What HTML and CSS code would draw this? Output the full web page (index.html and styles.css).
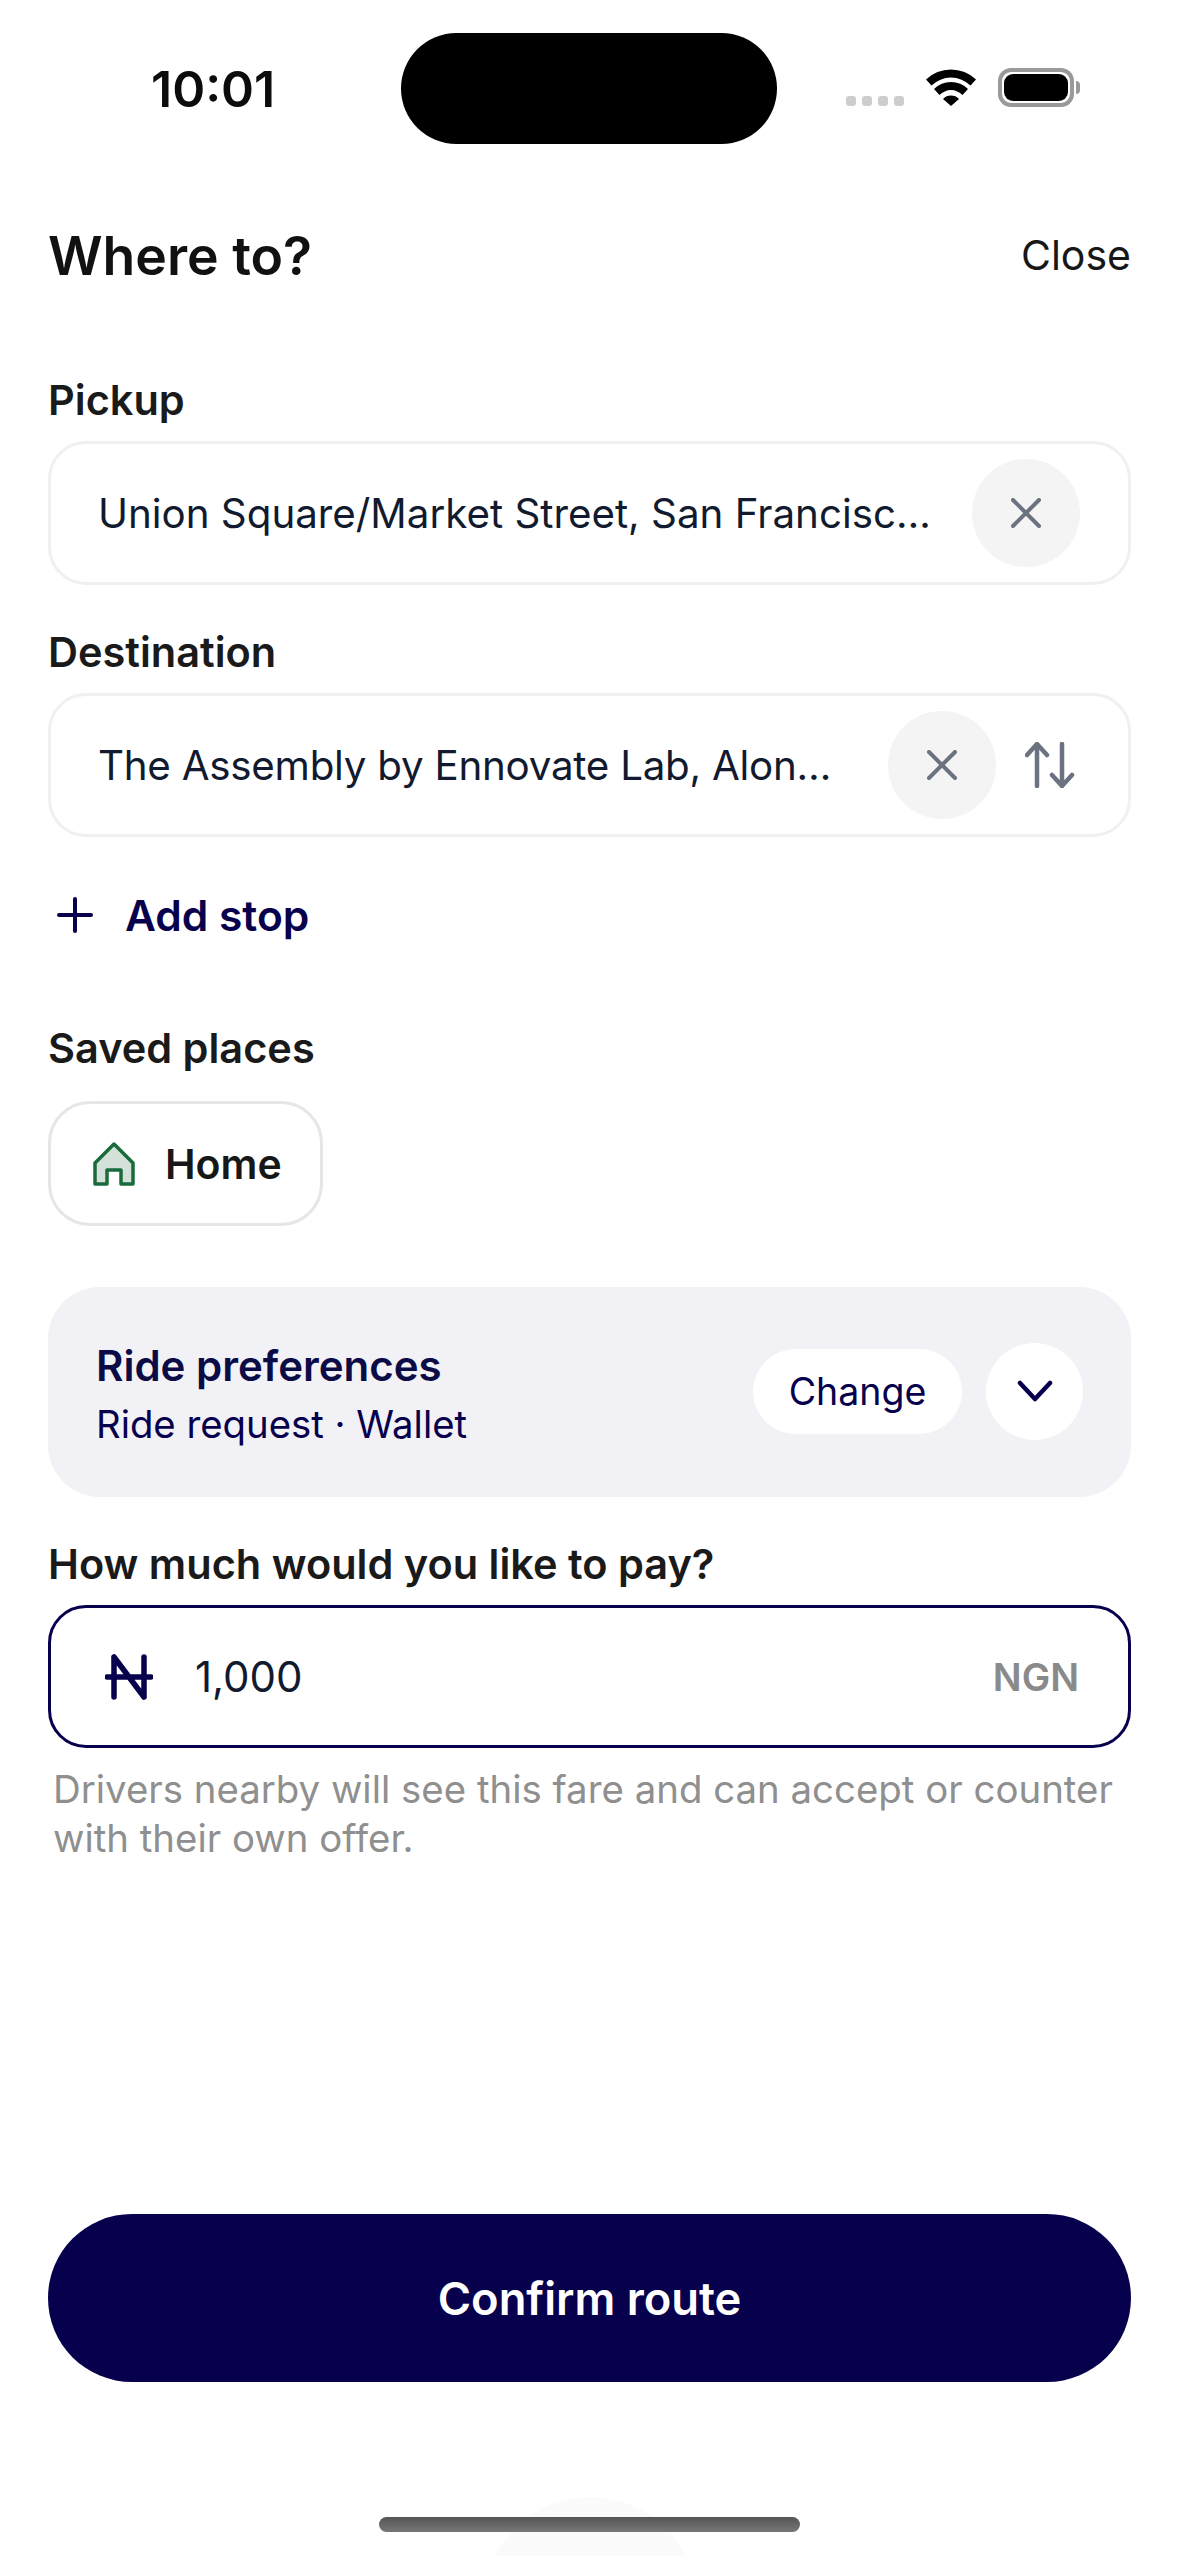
FILE: index.html
```html
<!DOCTYPE html>
<html lang="en">
  <head>
    <meta charset="UTF-8" />
    <meta name="viewport" content="width=device-width, initial-scale=1.0" />
    <title>Where to?</title>
    <link rel="stylesheet" href="styles.css">
  </head>
  <body>
    <div class="screen">
      <!-- Status bar -->
      <div class="status-bar">
        <span class="status-time">10:01</span>
        <div class="island"></div>
        <div class="status-icons">
          <div class="signal"><i></i><i></i><i></i><i></i></div>
          <svg class="wifi" width="50" height="37" viewBox="0 0 50 37">
            <path d="M0 10.5A36 36 0 0 1 50 10.5L44.5 16.5A28 28 0 0 0 5.5 16.5Z" />
            <path d="M8 20A24 24 0 0 1 42 20L36.5 26A16 16 0 0 0 13.5 26Z" />
            <path d="M17 30A11 11 0 0 1 33 30L25 37Z" />
          </svg>
          <div class="battery"><div class="battery-level"></div></div>
          <div class="battery-nub"></div>
        </div>
      </div>

      <div class="header">
        <h1>Where to?</h1>
        <span class="close-link">Close</span>
      </div>

      <div class="field-label pickup-label">Pickup</div>
      <div class="field">
        <span class="field-text">Union Square/Market Street, San Francisc…</span>
        <button class="clear-button">
          <svg width="30" height="30" viewBox="0 0 30 30"><path d="M2 2L28 28M28 2L2 28" /></svg>
        </button>
      </div>

      <div class="field-label destination-label">Destination</div>
      <div class="field">
        <span class="field-text destination-text">The Assembly by Ennovate Lab, Alon…</span>
        <button class="clear-button">
          <svg width="30" height="30" viewBox="0 0 30 30"><path d="M2 2L28 28M28 2L2 28" /></svg>
        </button>
        <svg class="swap-icon" width="50" height="46" viewBox="0 0 50 46">
          <path d="M12 2V44M2 13L12 2L22 13M37 2V44M27 33L37 44L47 33" />
        </svg>
      </div>

      <div class="add-stop">
        <svg width="36" height="36" viewBox="0 0 36 36"><path d="M18 2V34M2 18H34" /></svg>
        <span>Add stop</span>
      </div>

      <div class="field-label saved-label">Saved places</div>
      <div class="saved-chip">
        <svg width="42" height="44" viewBox="0 0 42 44">
          <path d="M21 2L40 21V42H28V28H14V42H2V21Z" />
        </svg>
        <span>Home</span>
      </div>

      <div class="prefs-card">
        <div class="prefs-text">
          <div class="prefs-title">Ride preferences</div>
          <div class="prefs-sub">Ride request · Wallet</div>
        </div>
        <button class="change-button">Change</button>
        <button class="chevron-button">
          <svg width="36" height="22" viewBox="0 0 36 22"><path d="M3 3L18 19L33 3" /></svg>
        </button>
      </div>

      <div class="field-label pay-label">How much would you like to pay?</div>
      <div class="fare-input">
        <svg class="naira" width="48" height="46" viewBox="0 0 48 46">
          <path d="M9 3V43M39 3V43M9 3L39 43M2 23H46" />
        </svg>
        <span class="fare-value">1,000</span>
        <span class="fare-currency">NGN</span>
      </div>
      <p class="fare-help">Drivers nearby will see this fare and can accept or counter with their own offer.</p>

      <button class="confirm-button">Confirm route</button>

      <div class="home-glow"></div>
      <div class="home-bar"></div>
    </div>
  </body>
</html>
```

FILE: styles.css
```css
* {
  box-sizing: border-box;
}

body {
  margin: 0;
  background-color: #fff;
  font-family: Inter, "Noto Sans", sans-serif;
  color: #171717;
}

button {
  font-family: inherit;
  border: none;
  padding: 0;
}

.screen {
  position: relative;
  display: flex;
  flex-direction: column;
  width: 1179px;
  height: 2556px;
  padding: 33px 48px 24px;
  overflow: hidden;
}

/* Status bar */
.status-bar {
  display: flex;
  align-items: center;
  height: 111px;
}

.status-time {
  width: 353px;
  padding-left: 103px;
  font-size: 50px;
  font-weight: 600;
  color: #0c0c0c;
}

.island {
  width: 376px;
  height: 111px;
  border-radius: 56px;
  background: #000;
}

.status-icons {
  display: flex;
  align-items: flex-start;
  height: 111px;
  padding-top: 35px;
  margin-left: 69px;
}

.signal {
  display: flex;
  gap: 6px;
  margin-top: 28px;
  margin-right: 22px;
}

.signal i {
  width: 10px;
  height: 10px;
  border-radius: 3px;
  background: #cdcdcd;
}

.wifi {
  margin-top: 1px;
  margin-right: 22px;
}

.battery {
  width: 76px;
  height: 39px;
  padding: 2px;
  border: 4px solid #999;
  border-radius: 13px;
}

.battery-level {
  width: 100%;
  height: 100%;
  border-radius: 9px;
  background: #000;
}

.battery-nub {
  width: 4px;
  height: 13px;
  margin: 13px 0 0 2px;
  border-radius: 0 5px 5px 0;
  background: #999;
}

/* Header */
.header {
  display: flex;
  justify-content: space-between;
  align-items: center;
  height: 60px;
  margin-top: 81px;
}

h1 {
  margin: 0;
  font-size: 53.5px;
  font-weight: 600;
  color: #111;
}

.close-link {
  font-size: 41px;
  color: #171717;
}

/* Fields */
.field-label {
  height: 50px;
  line-height: 50px;
  font-size: 41.5px;
  font-weight: 600;
  color: #1a1a1a;
}

.pickup-label {
  margin-top: 90px;
}

.destination-label {
  margin-top: 42px;
}

.saved-label {
  margin-top: 83px;
}

.pay-label {
  margin-top: 42px;
}

.field {
  display: flex;
  align-items: center;
  height: 144px;
  margin-top: 16px;
  padding: 0 48px 0 47px;
  border: 3px solid #f0f0f0;
  border-radius: 38px;
}

.field-text {
  flex: 1;
  font-size: 40.3px;
  white-space: nowrap;
  color: #111a2e;
}

.destination-text {
  letter-spacing: -0.24px;
}

.clear-button {
  display: flex;
  align-items: center;
  justify-content: center;
  width: 108px;
  height: 108px;
  border-radius: 50%;
  background: #f4f4f4;
}

.clear-button path {
  fill: none;
  stroke: #6b7280;
  stroke-width: 4;
  stroke-linecap: round;
}

.swap-icon {
  margin: 0 5px 0 29px;
}

.swap-icon path {
  fill: none;
  stroke: #6b7280;
  stroke-width: 4.5;
  stroke-linecap: round;
  stroke-linejoin: round;
}

/* Add stop */
.add-stop {
  display: flex;
  align-items: center;
  height: 50px;
  margin-top: 53px;
  padding-left: 9px;
  gap: 32px;
  font-size: 42.5px;
  font-weight: 600;
  color: #07004d;
}

.add-stop path {
  fill: none;
  stroke: #07004d;
  stroke-width: 4;
  stroke-linecap: round;
}

/* Saved places */
.saved-chip {
  display: flex;
  align-items: center;
  gap: 30px;
  width: 275px;
  height: 125px;
  margin-top: 28px;
  padding-left: 42px;
  border: 3px solid #e6e6e6;
  border-radius: 42px;
  font-size: 41px;
  font-weight: 600;
  color: #171717;
}

.saved-chip path {
  fill: #d3e1d9;
  stroke: #1a6b3c;
  stroke-width: 3.5;
  stroke-linejoin: round;
}

/* Ride preferences */
.prefs-card {
  display: flex;
  align-items: center;
  height: 210px;
  margin-top: 61px;
  padding: 0 48px;
  border-radius: 52px;
  background: #f1f1f6;
}

.prefs-text {
  flex: 1;
  padding-top: 5px;
}

.prefs-title {
  font-size: 42px;
  font-weight: 600;
  line-height: 50px;
  color: #0b0b46;
}

.prefs-sub {
  margin-top: 8px;
  font-size: 38.3px;
  line-height: 50px;
  color: #07004d;
}

.change-button {
  width: 209px;
  height: 85px;
  margin-bottom: 2px;
  border-radius: 43px;
  background: #fff;
  font-size: 37.5px;
  color: #07004d;
}

.chevron-button {
  display: flex;
  align-items: center;
  justify-content: center;
  width: 97px;
  height: 97px;
  margin-left: 24px;
  margin-bottom: 2px;
  border-radius: 50%;
  background: #fff;
}

.chevron-button path {
  fill: none;
  stroke: #07004d;
  stroke-width: 4.5;
  stroke-linecap: round;
  stroke-linejoin: round;
}

/* Fare */
.fare-input {
  display: flex;
  align-items: center;
  height: 143px;
  margin-top: 16px;
  padding: 0 49px 0 54px;
  border: 3px solid #07004d;
  border-radius: 38px;
}

.naira path {
  fill: none;
  stroke: #07004d;
  stroke-width: 5.5;
  stroke-linecap: round;
  stroke-linejoin: round;
}

.fare-value {
  flex: 1;
  margin-left: 42px;
  font-size: 42px;
  color: #111a2e;
}

.fare-currency {
  font-size: 38px;
  font-weight: 600;
  color: #8a8a8a;
}

.fare-help {
  margin: 17px 0 0;
  padding-left: 5px;
  font-size: 38.4px;
  line-height: 49px;
  color: #8f8f8f;
}

/* Bottom */
.confirm-button {
  height: 168px;
  margin-top: auto;
  border-radius: 84px;
  background: #07004d;
  font-size: 45.3px;
  font-weight: 600;
  color: #fff;
}

.home-glow {
  position: absolute;
  left: 483px;
  top: 2497px;
  width: 215px;
  height: 215px;
  border-radius: 50%;
  background: #fbfbfb;
}

.home-bar {
  position: relative;
  align-self: center;
  width: 421px;
  height: 15px;
  margin-top: 135px;
  border-radius: 8px;
  background: linear-gradient(#555, #777);
}
```
